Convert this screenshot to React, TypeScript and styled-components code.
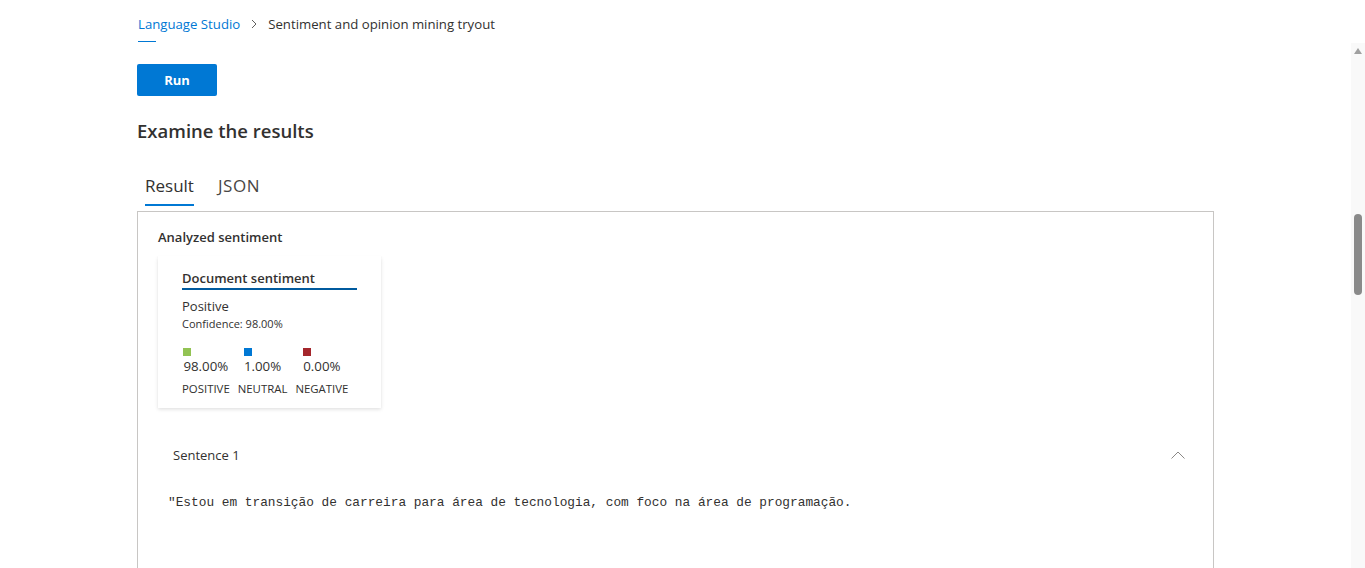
import React from "react";
import styled, { createGlobalStyle } from "styled-components";

const GlobalStyle = createGlobalStyle`
  html, body { margin: 0; padding: 0; background: #ffffff; }
  body { font-family: "Open Sans", "Noto Sans", Arial, sans-serif; color: #323130; }
  * { box-sizing: border-box; }
`;

const Page = styled.div`
  width: 1365px;
  height: 568px;
  overflow: hidden;
  display: flex;
  flex-direction: column;
`;

const Header = styled.header`
  height: 43px;
  flex-shrink: 0;
  padding-left: 138px;
  display: flex;
  flex-direction: column;
  justify-content: flex-end;
`;

const Breadcrumb = styled.nav`
  display: flex;
  align-items: center;
  gap: 10px;
  height: 20px;
  margin-bottom: 7px;
  font-size: 13.2px;
`;

const CrumbLink = styled.a`
  color: #0078d4;
  text-decoration: none;
`;

const CrumbCurrent = styled.span`
  color: #323130;
`;

const CrumbUnderline = styled.div`
  width: 18px;
  height: 1px;
  background: #0078d4;
  margin-bottom: 1px;
`;

const Body = styled.div`
  flex: 1;
  display: flex;
  min-height: 0;
`;

const Main = styled.main`
  flex: 1;
  padding: 21px 137px 0 137px;
  display: flex;
  flex-direction: column;
  min-width: 0;
  overflow: hidden;
`;

const RunButton = styled.button`
  width: 80px;
  height: 32px;
  border: none;
  border-radius: 2px;
  background: #0078d4;
  color: #ffffff;
  font-family: inherit;
  font-size: 13px;
  font-weight: 700;
  cursor: pointer;
`;

const Heading = styled.h2`
  margin: 21px 0 0 0;
  font-size: 18.5px;
  line-height: 28px;
  font-weight: 600;
  color: #323130;
`;

const Tabs = styled.div`
  display: flex;
  gap: 24px;
  margin-top: 21px;
  padding-left: 8px;
`;

const Tab = styled.div<{ $active?: boolean }>`
  height: 40px;
  display: flex;
  align-items: center;
  font-size: 17px;
  font-weight: ${(p) => (p.$active ? 500 : 400)};
  color: ${(p) => (p.$active ? "#323130" : "#484644")};
  letter-spacing: ${(p) => (p.$active ? "0" : "0.6px")};
  border-bottom: 2px solid ${(p) => (p.$active ? "#0078d4" : "transparent")};
`;

const Panel = styled.section`
  margin-top: 5px;
  flex-shrink: 0;
  border: 1px solid #c8c6c4;
  height: 520px;
  padding: 15px 20px 0 20px;
  display: flex;
  flex-direction: column;
`;

const SectionTitle = styled.div`
  font-size: 13px;
  font-weight: 600;
  line-height: 20px;
  color: #323130;
`;

const Card = styled.div`
  margin-top: 9px;
  width: 223px;
  height: 152px;
  padding: 11px 24px 0 24px;
  background: #ffffff;
  box-shadow: 0 1.6px 3.6px rgba(0, 0, 0, 0.13), 0 0.3px 0.9px rgba(0, 0, 0, 0.11);
  display: flex;
  flex-direction: column;
`;

const CardTitle = styled.div`
  width: 175px;
  font-size: 13px;
  font-weight: 600;
  line-height: 20px;
  padding-top: 1px;
  border-bottom: 2px solid #005a9e;
`;

const Label = styled.div`
  margin-top: 6px;
  font-size: 13px;
  line-height: 20px;
`;

const Confidence = styled.div`
  font-size: 11px;
  line-height: 16px;
`;

const Scores = styled.div`
  margin-top: 16px;
  display: flex;
  gap: 8px;
`;

const ScoreCol = styled.div`
  display: flex;
  flex-direction: column;
  align-items: center;
`;

const ScoreGroup = styled.div`
  display: flex;
  flex-direction: column;
  align-items: flex-start;
`;

const Swatch = styled.span<{ $color: string }>`
  width: 8px;
  height: 8px;
  background: ${(p) => p.$color};
`;

const Pct = styled.span`
  font-size: 13.3px;
  line-height: 20px;
`;

const ScoreLabel = styled.span`
  margin-top: 5px;
  font-size: 11.4px;
  line-height: 16px;
  color: #323130;
`;

const SentenceHeader = styled.div`
  margin-top: 25px;
  height: 44px;
  padding: 0 8px 0 15px;
  display: flex;
  align-items: center;
  justify-content: space-between;
  font-size: 13px;
`;

const SentenceText = styled.pre`
  margin: 15px 0 0 10px;
  font-family: "Liberation Mono", "DejaVu Sans Mono", monospace;
  font-size: 12.8px;
  line-height: 22px;
  color: #323130;
`;

const Scrollbar = styled.div`
  width: 14px;
  flex-shrink: 0;
  background: #f9f9f9;
  display: flex;
  flex-direction: column;
  align-items: center;
  padding-top: 5px;
`;

const ScrollThumb = styled.div`
  margin-top: 160px;
  width: 8px;
  height: 81px;
  border-radius: 4px;
  background: #8a8a8a;
`;

const scores = [
  { color: "#92c353", pct: "98.00%", label: "POSITIVE" },
  { color: "#0078d4", pct: "1.00%", label: "NEUTRAL" },
  { color: "#a4262c", pct: "0.00%", label: "NEGATIVE" },
];

export default function App() {
  return (
    <Page>
      <GlobalStyle />
      <Header>
        <Breadcrumb>
          <CrumbLink href="#">Language Studio</CrumbLink>
          <svg width="8" height="10" viewBox="0 0 8 10">
            <polyline points="2,1 6,5 2,9" fill="none" stroke="#605e5c" strokeWidth="1" />
          </svg>
          <CrumbCurrent>Sentiment and opinion mining tryout</CrumbCurrent>
        </Breadcrumb>
        <CrumbUnderline />
      </Header>
      <Body>
        <Main>
          <div>
            <RunButton>Run</RunButton>
          </div>
          <Heading>Examine the results</Heading>
          <Tabs>
            <Tab $active>Result</Tab>
            <Tab>JSON</Tab>
          </Tabs>
          <Panel>
            <SectionTitle>Analyzed sentiment</SectionTitle>
            <Card>
              <CardTitle>Document sentiment</CardTitle>
              <Label>Positive</Label>
              <Confidence>Confidence: 98.00%</Confidence>
              <Scores>
                {scores.map((s) => (
                  <ScoreCol key={s.label}>
                    <ScoreGroup>
                      <Swatch $color={s.color} />
                      <Pct>{s.pct}</Pct>
                    </ScoreGroup>
                    <ScoreLabel>{s.label}</ScoreLabel>
                  </ScoreCol>
                ))}
              </Scores>
            </Card>
            <SentenceHeader>
              <span>Sentence 1</span>
              <svg width="14" height="8" viewBox="0 0 14 8">
                <polyline points="0.5,7.5 7,1 13.5,7.5" fill="none" stroke="#8a8886" strokeWidth="1" />
              </svg>
            </SentenceHeader>
            <SentenceText>"Estou em transição de carreira para área de tecnologia, com foco na área de programação.</SentenceText>
          </Panel>
        </Main>
        <Scrollbar>
          <svg width="8" height="6" viewBox="0 0 8 6">
            <polygon points="4,0 8,6 0,6" fill="#a0a0a0" />
          </svg>
          <ScrollThumb />
        </Scrollbar>
      </Body>
    </Page>
  );
}
